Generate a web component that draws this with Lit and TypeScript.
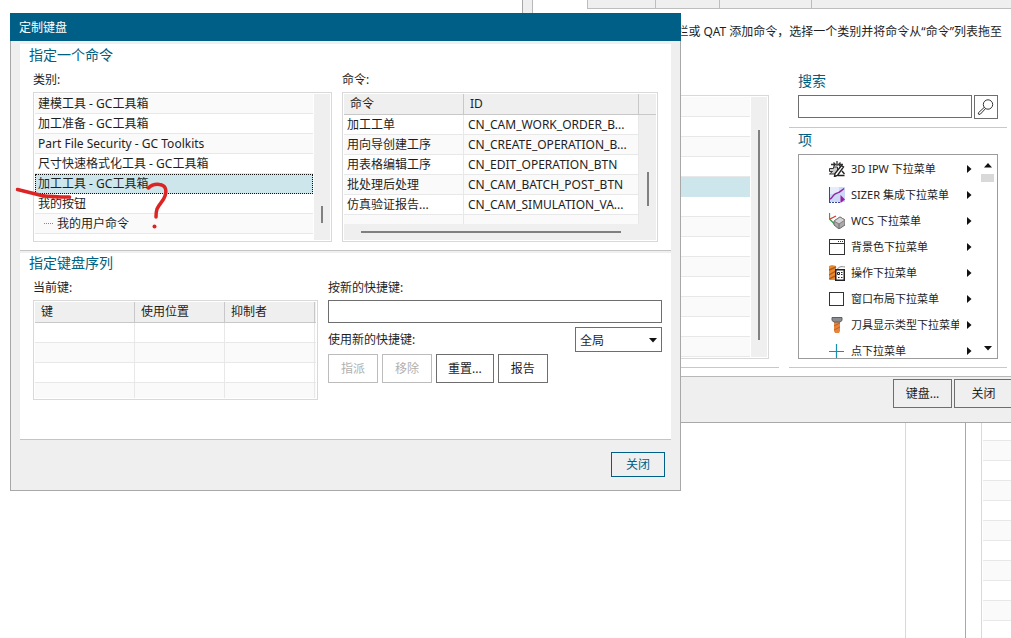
import { LitElement, html, css, svg } from "lit";
import { customElement, state } from "lit/decorators.js";
import { classMap } from "lit/directives/class-map.js";

const categories = [
  { label: "建模工具 - GC工具箱" },
  { label: "加工准备 - GC工具箱" },
  { label: "Part File Security - GC Toolkits" },
  { label: "尺寸快速格式化工具 - GC工具箱" },
  { label: "加工工具 - GC工具箱" },
  { label: "我的按钮" },
  { label: "我的用户命令", child: true },
  { label: "" },
];

const commands = [
  ["加工工单", "CN_CAM_WORK_ORDER_B..."],
  ["用向导创建工序", "CN_CREATE_OPERATION_B..."],
  ["用表格编辑工序", "CN_EDIT_OPERATION_BTN"],
  ["批处理后处理", "CN_CAM_BATCH_POST_BTN"],
  ["仿真验证报告...", "CN_CAM_SIMULATION_VA..."],
];

const icons = {
  ipw: svg`
    <path d="M2 3.500h4M4.500 1.500l2 2-2 2M14 3.500h-3.500M11.500 1.500l-2 2 2 2M8 0v5" fill="none" stroke="#333" stroke-width="1.300"/>
    <path d="M.5 7.500h4V6h4v4l-2 3h-6l3-2.500h-3z" fill="#ccc" stroke="#333"/>
    <path d="M12.500 4.500l2 1.500-6 8.500-3 1 .5-3zM9 14.500h6.500M13 10l2.500 3" fill="#fff" stroke="#222" stroke-width="1.400"/>`,
  sizer: svg`
    <rect x="1" width="15" height="15" fill="#ccd8f6"/>
    <rect x="1" width="9" height="7" fill="#e6ecfc"/>
    <path d="M.5 0v15.500" stroke="#3a459c"/>
    <path d="M0 15.500h11" stroke="#3a459c" stroke-dasharray="2 1"/>
    <path d="M1 12c3-1 3-5 6-5.500S11 4.500 15 1.500" fill="none" stroke="#8f2aa0" stroke-width="1.500"/>
    <path d="M11.500 8l4.500 4.500-4.500 3.500z" fill="#9a1fa8"/>`,
  wcs: svg`
    <path d="M.5 0v6l5 5" fill="none" stroke="#2fa54a" stroke-width="1.300"/>
    <path d="M1 6l6-3" stroke="#cf3a32" stroke-width="1.300"/>
    <path d="M5 8l6-4 5 3v5l-6 4-5-4z" fill="#a9a9a9" stroke="#6a6a6a"/>
    <path d="M5 8l5 3 6-4-5-3z" fill="#d4d4d4" stroke="#808080"/>
    <path d="M10 11v5" stroke="#707070"/>`,
  background: svg`
    <rect x=".5" y=".5" width="15" height="15" fill="#fff" stroke="#333"/>
    <path d="M1 4.500h14" stroke="#333"/>
    <path d="M9 2.500h1M11 2.500h1M13 2.500h1" stroke="#333"/>`,
  operation: svg`
    <path d="M0 1l3-1 4 1v14H1L0 12z" fill="#ec8a2e"/>
    <path d="M0 5l7-3M0 10l7-4M0 14l6-3" stroke="#b05a18" stroke-width="1.400"/>
    <path d="M8 5c1-3 4-4 8-3" fill="none" stroke="#888"/>
    <rect x="6.750" y="4.750" width="8.500" height="10.500" fill="#fff" stroke="#222" stroke-width="1.500"/>
    <path d="M8.500 7.500h2v2h-2zM12 7.500h1.500M12 9.500h1.500M9 12.500h1.500M12 12.500h1.500" fill="none" stroke="#222"/>`,
  layout: svg`<rect x=".5" y="1.500" width="14" height="13" fill="#fff" stroke="#333"/>`,
  tool: svg`
    <path d="M5 5h6v9l-1 2H6l-1-2z" fill="#e8843a"/>
    <path d="M5 9l6-3M5 13l6-3" stroke="#c0602a"/>
    <path d="M3 .5h10v3l-2 1.500H5L3 3.500z" fill="#8a8e92" stroke="#5d6165"/>`,
  point: svg`<path d="M7.500 1v15M0 8.500h15" stroke="#1690ad" stroke-width="1.200"/>`,
};

const menuItems = [
  { icon: icons.ipw, label: "3D IPW 下拉菜单" },
  { icon: icons.sizer, label: "SIZER 集成下拉菜单" },
  { icon: icons.wcs, label: "WCS 下拉菜单" },
  { icon: icons.background, label: "背景色下拉菜单" },
  { icon: icons.operation, label: "操作下拉菜单" },
  { icon: icons.layout, label: "窗口布局下拉菜单" },
  { icon: icons.tool, label: "刀具显示类型下拉菜单" },
  { icon: icons.point, label: "点下拉菜单" },
];

const shared = css`
  * {
    box-sizing: border-box;
  }
  h2,
  p,
  ul {
    margin: 0;
    padding: 0;
    list-style: none;
    font-weight: normal;
  }
  h2 {
    font-size: 14px;
    line-height: 20px;
    color: #00607f;
  }
  button,
  input,
  select {
    font: inherit;
    color: inherit;
    margin: 0;
    border: 1px solid #6e6e6e;
    border-radius: 0;
    background: #fff;
    outline: none;
  }
  button {
    height: 29px;
    min-width: 50px;
    padding: 0 11px 2px;
    white-space: nowrap;
  }
  button:disabled {
    color: #b0b0b0;
    border-color: #bcbcbc;
  }
  .list {
    display: flex;
    gap: 1px;
    padding: 1px;
    border: 1px solid #d9d9d9;
    overflow: hidden;
  }
  .rows {
    flex: 1;
    min-width: 0;
    overflow: hidden;
  }
  .row {
    height: 20px;
    line-height: 19px;
    padding-left: 3px;
    border-bottom: 1px solid #e8e8e8;
    white-space: nowrap;
  }
  .row:nth-child(odd) {
    background: #fafafa;
  }
  .row.selected {
    background: #cde6eb;
    border-color: #cde6eb;
  }
  .track {
    width: 16px;
    background: #efefef;
    display: flex;
    flex-direction: column;
    align-items: center;
  }
  .thumb {
    width: 2px;
    background: #808080;
  }
`;

@customElement("customize-window")
class CustomizeWindow extends LitElement {
  static styles = [
    shared,
    css`
      :host {
        display: block;
        border: 1px solid #a8a8a8;
        background: #efefef;
        padding-left: 9px;
      }
      .page {
        border-left: 1px solid #b8b8b8;
        border-bottom: 1px solid #b8b8b8;
        background: #fff;
        padding-bottom: 8px;
      }
      .tabs {
        display: flex;
        height: 25px;
        margin-left: 54px;
        background: #efefef;
        border: solid #bdbdbd;
        border-width: 0 0 1px 1px;
      }
      .tab {
        height: 24px;
        border-width: 0 1px 0 0;
        border-color: #bdbdbd;
        background: none;
      }
      .tab.small {
        width: 68px;
      }
      .tab.medium {
        width: 64px;
      }
      .tab.large {
        width: 92px;
      }
      .hint {
        padding: 13px 18px 29px 0;
        line-height: 20px;
        text-align: right;
        white-space: nowrap;
      }
      .columns {
        display: flex;
        gap: 10px;
        padding-right: 13px;
      }
      .left {
        flex: 1;
        padding: 24px 10px 8px;
        border-bottom: 1px solid #c8c8c8;
      }
      .left .track {
        padding-top: 33px;
      }
      .left .thumb {
        height: 210px;
      }
      .right {
        width: 218px;
      }
      .block {
        padding: 0 9px 8px;
        border-bottom: 1px solid #c8c8c8;
      }
      .items {
        padding-top: 2px;
      }
      .search {
        display: flex;
        gap: 2px;
        margin-top: 4px;
      }
      .search input {
        flex: 1;
        min-width: 0;
        height: 23px;
      }
      .search button {
        width: 24px;
        min-width: 24px;
        height: 24px;
        padding: 0;
        display: grid;
        place-items: center;
      }
      .menu {
        display: flex;
        height: 205px;
        margin-top: 4px;
        border: 1px solid #9c9c9c;
        padding: 1px 3px 0 30px;
        overflow: hidden;
        font-size: 11px;
      }
      .entries {
        flex: 1;
        min-width: 0;
      }
      .entry {
        display: flex;
        align-items: center;
        height: 26px;
      }
      .entry .name {
        width: 108px;
        margin: 0 8px 0 6px;
        padding-bottom: 2px;
        overflow: hidden;
        white-space: nowrap;
      }
      .entry svg {
        flex: none;
      }
      .scroll {
        width: 13px;
        display: flex;
        flex-direction: column;
        align-items: center;
        padding: 7px 0;
      }
      .scroll .handle {
        width: 13px;
        height: 8px;
        margin: 6px 0 auto;
        background: #d9d9d9;
      }
      .footer {
        display: flex;
        justify-content: flex-end;
        gap: 2px;
        padding: 2px 7px 14px;
      }
      .footer button {
        width: 59px;
        background: #efefef;
      }
    `,
  ];

  render() {
    return html`
      <div class="page">
        <div class="tabs">
          <button class="tab small"></button>
          <button class="tab medium"></button>
          <button class="tab large"></button>
        </div>
        <p class="hint">栏或 QAT 添加命令，选择一个类别并将命令从“命令”列表拖至</p>
        <div class="columns">
          <div class="left">
            <div class="list">
              <div class="rows">
                ${Array.from(
                  { length: 13 },
                  (_, i) => html`<div class=${classMap({ row: true, selected: i === 4 })}></div>`
                )}
              </div>
              <div class="track"><div class="thumb"></div></div>
            </div>
          </div>
          <div class="right">
            <div class="block">
              <h2><label for="search">搜索</label></h2>
              <div class="search">
                <input id="search" type="text" />
                <button aria-label="搜索">
                  <svg width="18" height="18" viewBox="0 0 18 18" fill="none" stroke="#333">
                    <circle cx="11" cy="6.500" r="4.700" />
                    <path d="M7.300 9.300l1.200 1.300-5 5.400-1.700.5-.6-1.500z" fill="#fff" />
                  </svg>
                </button>
              </div>
            </div>
            <div class="block items">
              <h2>项</h2>
              <div class="menu">
                <ul class="entries">
                  ${menuItems.map(
                    (m) => html`<li class="entry">
                      <svg width="16" height="16" viewBox="0 0 16 16">${m.icon}</svg>
                      <span class="name">${m.label}</span>
                      <svg width="5" height="8" viewBox="0 0 5 8"><path d="M0 0l4.500 4L0 8z" fill="#111" /></svg>
                    </li>`
                  )}
                </ul>
                <div class="scroll">
                  <svg width="8" height="5" viewBox="0 0 8 5"><path d="M0 4.500L4 0l4 4.500z" fill="#111" /></svg>
                  <div class="handle"></div>
                  <svg width="8" height="5" viewBox="0 0 8 5"><path d="M0 0l4 4.500L8 0z" fill="#111" /></svg>
                </div>
              </div>
            </div>
          </div>
        </div>
      </div>
      <div class="footer">
        <button>键盘...</button>
        <button>关闭</button>
      </div>
    `;
  }
}

@customElement("keyboard-dialog")
class KeyboardDialog extends LitElement {
  @state() selected = 4;

  static styles = [
    shared,
    css`
      :host {
        display: block;
        background: #efefef;
      }
      .title {
        height: 28px;
        line-height: 30px;
        padding-left: 9px;
        background: #005f87;
        color: #fff;
      }
      .body {
        border: solid #a8a8a8;
        border-width: 0 1px 1px;
        padding: 3px 9px 13px;
      }
      .panel {
        background: #fff;
        border-bottom: 1px solid #c4c4c4;
        padding: 1px 9px 8px;
      }
      .panel + .panel {
        margin-top: 2px;
        padding: 0 9px 39px;
      }
      .caption {
        display: block;
        line-height: 20px;
        margin-bottom: 2px;
      }
      .pair {
        display: grid;
        grid-template-columns: 299px 1fr;
        gap: 10px;
        margin: 5px 4px 0;
      }
      .keys {
        display: grid;
        grid-template-columns: 285px 1fr;
        gap: 10px;
        margin: 5px 0 0 4px;
      }
      .categories {
        height: 150px;
      }
      .categories .track {
        padding-top: 112px;
      }
      .categories .thumb {
        height: 17px;
      }
      .categories .row.selected {
        border: 0;
        outline: 1px dotted #111;
        outline-offset: -1px;
      }
      .row.child::before {
        content: "";
        display: inline-block;
        width: 9px;
        margin: 0 4px 4px 6px;
        border-top: 1px dotted #888;
      }
      .box {
        border: 1px solid #d9d9d9;
        padding: 1px;
      }
      table {
        width: 100%;
        table-layout: fixed;
        border-collapse: separate;
        border-spacing: 0;
      }
      th {
        height: 21px;
        padding: 0 0 0 6px;
        background: #efefef;
        border: solid #c8c8c8;
        border-width: 0 1px 1px 0;
        font-weight: normal;
        text-align: left;
        line-height: 20px;
      }
      td {
        height: 20px;
        padding: 0 0 0 3px;
        border: solid #e8e8e8;
        border-width: 0 1px 1px 0;
        line-height: 19px;
        white-space: nowrap;
      }
      tbody tr:nth-child(even) td {
        background: #fafafa;
      }
      .short td {
        height: 9px;
        border-bottom: 0;
      }
      .wide td + td {
        padding-left: 4px;
      }
      .wide th.edge {
        border-right: 0;
      }
      .wide td.side {
        padding: 0;
        border: 0;
        background: #efefef;
        vertical-align: top;
      }
      .side .thumb {
        height: 34px;
        margin: 57px 0 0 8px;
      }
      .hscroll {
        height: 16px;
        padding: 7px 35px 0 17px;
        background: #efefef;
      }
      .hscroll .bar {
        height: 2px;
        background: #808080;
      }
      .c-name {
        width: 120px;
      }
      .c-id {
        width: 175px;
      }
      .c-key {
        width: 100px;
      }
      .c-use,
      .c-by {
        width: 90px;
      }
      .current {
        height: 100px;
        overflow: hidden;
      }
      .current .short td {
        height: 15px;
      }
      .current td:last-child,
      .current th:last-child {
        border-right: 0;
        padding: 0;
      }
      .shortcut {
        display: block;
        width: 100%;
        height: 23px;
      }
      .scope {
        display: flex;
        justify-content: space-between;
        margin: 4px 0 2px;
        line-height: 25px;
      }
      .select {
        position: relative;
        display: block;
      }
      .select select {
        display: block;
        appearance: none;
        width: 87px;
        height: 25px;
        padding: 0 4px 2px;
      }
      .select svg {
        position: absolute;
        right: 5px;
        top: 11px;
        pointer-events: none;
      }
      .actions {
        display: flex;
        gap: 4px;
      }
      .footer {
        display: flex;
        justify-content: flex-end;
        padding: 12px 6px 0;
      }
      .footer button {
        height: 25px;
        width: 54px;
        border-color: #005f87;
        color: #005f87;
        background: #efefef;
      }
    `,
  ];

  render() {
    return html`
      <div class="title">定制键盘</div>
      <div class="body">
        <section class="panel">
          <h2>指定一个命令</h2>
          <div class="pair">
            <div>
              <span class="caption" id="cat">类别:</span>
              <div class="list categories">
                <ul class="rows" role="listbox" aria-labelledby="cat">
                  ${categories.map(
                    (c, i) => html`<li
                      role="option"
                      aria-selected=${i === this.selected}
                      class=${classMap({ row: true, child: !!c.child, selected: i === this.selected })}
                      @click=${() => (this.selected = i)}
                    >${c.label}</li>`
                  )}
                </ul>
                <div class="track"><div class="thumb"></div></div>
              </div>
            </div>
            <div>
              <span class="caption" id="cmd">命令:</span>
              <div class="box">
                <table class="wide" aria-labelledby="cmd">
                  <colgroup>
                    <col class="c-name" />
                    <col class="c-id" />
                    <col />
                  </colgroup>
                  <thead>
                    <tr>
                      <th>命令</th>
                      <th>ID</th>
                      <th class="edge"></th>
                    </tr>
                  </thead>
                  <tbody>
                    ${commands.map(
                      ([name, id], i) => html`<tr>
                        <td>${name}</td>
                        <td>${id}</td>
                        ${i === 0
                          ? html`<td class="side" rowspan="6"><div class="thumb"></div></td>`
                          : null}
                      </tr>`
                    )}
                    <tr class="short">
                      <td></td>
                      <td></td>
                    </tr>
                  </tbody>
                </table>
                <div class="hscroll"><div class="bar"></div></div>
              </div>
            </div>
          </div>
        </section>
        <section class="panel">
          <h2>指定键盘序列</h2>
          <div class="keys">
            <div>
              <span class="caption" id="cur">当前键:</span>
              <div class="box current">
                <table aria-labelledby="cur">
                  <colgroup>
                    <col class="c-key" />
                    <col class="c-use" />
                    <col class="c-by" />
                    <col />
                  </colgroup>
                  <thead>
                    <tr>
                      <th>键</th>
                      <th>使用位置</th>
                      <th>抑制者</th>
                      <th></th>
                    </tr>
                  </thead>
                  <tbody>
                    ${[0, 1, 2, 3].map(
                      (i) => html`<tr class=${classMap({ short: i === 3 })}>
                        <td></td>
                        <td></td>
                        <td></td>
                        <td></td>
                      </tr>`
                    )}
                  </tbody>
                </table>
              </div>
            </div>
            <div>
              <label class="caption" for="shortcut">按新的快捷键:</label>
              <input class="shortcut" id="shortcut" type="text" />
              <div class="scope">
                <label for="scope">使用新的快捷键:</label>
                <span class="select">
                  <select id="scope">
                    <option>全局</option>
                  </select>
                  <svg width="8" height="5" viewBox="0 0 8 5"><path d="M0 0l4 4.500L8 0z" fill="#111" /></svg>
                </span>
              </div>
              <div class="actions">
                <button disabled>指派</button>
                <button disabled>移除</button>
                <button>重置...</button>
                <button>报告</button>
              </div>
            </div>
          </div>
        </section>
        <div class="footer"><button>关闭</button></div>
      </div>
    `;
  }
}

@customElement("app-root")
class AppRoot extends LitElement {
  static styles = css`
    :host {
      display: block;
      font: 12px "Noto Sans", "Noto Sans CJK SC", sans-serif;
      color: #1e1e1e;
    }
    .desktop {
      position: relative;
      display: flex;
      min-height: 100vh;
      overflow: hidden;
      background: #fff;
    }
    .desktop > div {
      box-sizing: border-box;
    }
    .canvas {
      flex: 1;
      border-right: 1px solid #d9d9d9;
    }
    .gutter {
      width: 60px;
      border-right: 1px solid #a8a8a8;
    }
    .side {
      width: 45px;
      padding-left: 15px;
    }
    .stripes {
      height: 100%;
      padding: 1px 0 0 1px;
      border-left: 1px solid #d9d9d9;
      background: repeating-linear-gradient(
          #fafafa 0 19px,
          #e8e8e8 19px 20px,
          #fff 20px 39px,
          #e8e8e8 39px 40px
        )
        content-box;
      box-sizing: border-box;
    }
    customize-window {
      position: absolute;
      left: 522px;
      right: -10px;
      top: -17px;
    }
    keyboard-dialog {
      position: absolute;
      left: 10px;
      top: 13px;
      width: 671px;
    }
    .ink {
      position: absolute;
      left: 14px;
      top: 178px;
      pointer-events: none;
    }
  `;

  render() {
    return html`
      <main class="desktop">
        <div class="canvas"></div>
        <div class="gutter"></div>
        <div class="side"><div class="stripes"></div></div>
        <customize-window></customize-window>
        <keyboard-dialog></keyboard-dialog>
        <svg class="ink" width="158" height="54" viewBox="14 178 158 54" fill="none" stroke="#dc2424" stroke-width="3.500" stroke-linecap="round">
          <path d="M17.500 189.500c8 2 16 4 24 6 10 1.500 19 1.500 28 1.500" />
          <path d="M148.500 188c3-3 7-4 11-3.500 6 .5 7.500 5.500 5.500 11.500-1.500 5-6 8-8 13-1 3-1 5-1 8" />
          <circle cx="154.500" cy="226.500" r="2" fill="#dc2424" stroke="none" />
        </svg>
      </main>
    `;
  }
}
